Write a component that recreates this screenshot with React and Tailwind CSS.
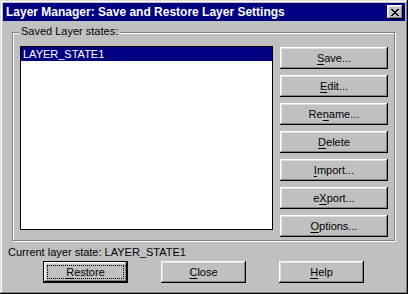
import React from "react";

const font = { fontFamily: '"Liberation Sans", Arial, sans-serif' };

function Btn({ children, className = "" }) {
  return (
    <div
      className={
        "flex h-[22px] items-center justify-center bg-[#c0c0c0] text-[11px] leading-[13px] text-black shadow-[inset_-1px_-1px_#000,inset_1px_1px_#fff,inset_-2px_-2px_#808080,inset_2px_2px_#dfdfdf] " +
        className
      }
    >
      <span>{children}</span>
    </div>
  );
}

const U = ({ children }) => <u className="underline underline-offset-[2px]">{children}</u>;

export default function App() {
  return (
    <div
      className="flex h-[294px] w-[408px] flex-col bg-[#c0c0c0] p-[3px] shadow-[inset_-1px_-1px_#000,inset_1px_1px_#dfdfdf,inset_-2px_-2px_#808080,inset_2px_2px_#fff]"
      style={font}
    >
      {/* title bar */}
      <div className="flex h-[18px] items-center bg-[#000080] pl-[3px] pr-[2px]">
        <span className="flex-1 text-[12px] font-bold leading-[14px] text-white">
          Layer Manager: Save and Restore Layer Settings
        </span>
        <div className="flex h-[14px] w-[16px] items-center justify-center bg-[#c0c0c0] shadow-[inset_-1px_-1px_#000,inset_1px_1px_#fff,inset_-2px_-2px_#808080,inset_2px_2px_#dfdfdf]">
          <svg width="8" height="7" viewBox="0 0 8 7" shapeRendering="crispEdges">
            <path
              d="M0 0h2v1h-2zM6 0h2v1h-2zM1 1h2v1h-2zM5 1h2v1h-2zM2 2h4v1h-4zM3 3h2v1h-2zM2 4h4v1h-4zM1 5h2v1h-2zM5 5h2v1h-2zM0 6h2v1h-2zM6 6h2v1h-2z"
              fill="#000"
            />
          </svg>
        </div>
      </div>

      {/* group box */}
      <div className="relative ml-[9px] mt-[11px] h-[209px] w-[383px] border border-[#808080] shadow-[1px_1px_0_#fff,inset_1px_1px_0_#fff]">
        <span className="absolute left-[6px] top-[-8px] bg-[#c0c0c0] px-[2px] text-[11px] leading-[13px] text-black">
          Saved Layer states:
        </span>
        <div className="flex pl-[7px] pt-[13px]">
          <div className="h-[184px] w-[253px] border border-black bg-white">
            <div className="flex h-[14px] items-center bg-[#000080] pl-[2px] text-[11px] leading-[13px] text-white">
              LAYER_STATE1
            </div>
          </div>
          <div className="ml-[7px] mt-[1px] flex flex-col gap-[6px]">
            <Btn className="w-[108px]"><U>S</U>ave...</Btn>
            <Btn className="w-[108px]"><U>E</U>dit...</Btn>
            <Btn className="w-[108px]">Re<U>n</U>ame...</Btn>
            <Btn className="w-[108px]"><U>D</U>elete</Btn>
            <Btn className="w-[108px]"><U>I</U>mport...</Btn>
            <Btn className="w-[108px]">e<U>X</U>port...</Btn>
            <Btn className="w-[108px]"><U>O</U>ptions...</Btn>
          </div>
        </div>
      </div>

      <div className="ml-[5px] mt-[5px] h-[13px] text-[11px] leading-[13px] text-black">
        Current layer state: LAYER_STATE1
      </div>

      <div className="ml-[40px] mt-[2px] flex gap-[33px]">
        <div className="h-[22px] w-[85px] border border-black">
          <div className="flex h-full w-full items-center justify-center bg-[#c0c0c0] p-[3px] shadow-[inset_-1px_-1px_#000,inset_1px_1px_#fff,inset_-2px_-2px_#808080,inset_2px_2px_#dfdfdf]">
            <div className="flex h-full w-full items-center justify-center border border-dotted border-black text-[11px] leading-[13px] text-black">
              <span><U>R</U>estore</span>
            </div>
          </div>
        </div>
        <Btn className="w-[85px]"><U>C</U>lose</Btn>
        <Btn className="w-[85px]"><U>H</U>elp</Btn>
      </div>
    </div>
  );
}
